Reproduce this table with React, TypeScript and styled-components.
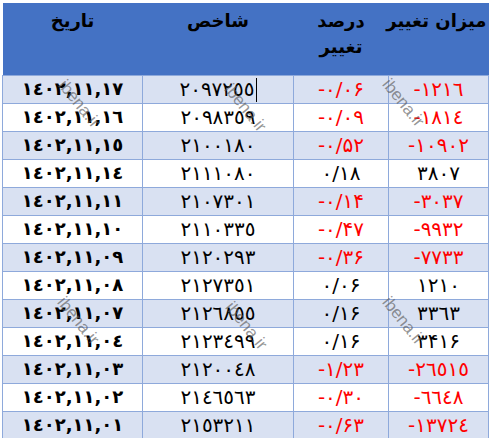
import styled, { createGlobalStyle } from "styled-components";

const GlobalStyle = createGlobalStyle`
  html, body {
    margin: 0;
    padding: 0;
    background: #ffffff;
  }
`;

type Row = {
  date: string;
  index: string;
  percent: string;
  change: string;
  caret?: boolean;
};

const rows: Row[] = [
  { date: "١٤٠٢,١١,١٧", index: "٢٠٩٧٢٥٥", percent: "-۰/۰۶", change: "-١٢١٦", caret: true },
  { date: "١٤٠٢,١١,١٦", index: "٢٠٩٨٣٥٩", percent: "-۰/۰۹", change: "-١٨١٤" },
  { date: "١٤٠٢,١١,١٥", index: "٢١٠٠١٨٠", percent: "-۰/۵۲", change: "-١٠٩٠٢" },
  { date: "١٤٠٢,١١,١٤", index: "٢١١١٠٨٠", percent: "۰/۱۸", change: "٣٨٠٧" },
  { date: "١٤٠٢,١١,١١", index: "٢١٠٧٣٠١", percent: "-۰/۱۴", change: "-٣٠٣٧" },
  { date: "١٤٠٢,١١,١٠", index: "٢١١٠٣٣٥", percent: "-۰/۴۷", change: "-٩٩٣٢" },
  { date: "١٤٠٢,١١,٠٩", index: "٢١٢٠٢٩٣", percent: "-۰/۳۶", change: "-٧٧٣٣" },
  { date: "١٤٠٢,١١,٠٨", index: "٢١٢٧٣٥١", percent: "۰/۰۶", change: "١٢١٠" },
  { date: "١٤٠٢,١١,٠٧", index: "٢١٢٦٨٥٥", percent: "۰/۱۶", change: "٣٣٦٣" },
  { date: "١٤٠٢,١١,٠٤", index: "٢١٢٣٤٩٩", percent: "۰/۱۶", change: "٣۴١۶" },
  { date: "١٤٠٢,١١,٠٣", index: "٢١٢٠٠٤٨", percent: "-۱/۲۳", change: "-٢٦٥١٥" },
  { date: "١٤٠٢,١١,٠٢", index: "٢١٤٦٥٦٣", percent: "-۰/۳۰", change: "-٦٦٤٨" },
  { date: "١٤٠٢,١١,٠١", index: "٢١٥٣٢١١", percent: "-۰/۶۳", change: "-١٣٧٢٤" },
];

// watermark centres, page coordinates
const marks = [
  { x: 79, y: 104 },
  { x: 245, y: 108 },
  { x: 403, y: 103 },
  { x: 78, y: 321 },
  { x: 246, y: 326 },
  { x: 403, y: 321 },
];

const Page = styled.div`
  position: relative;
  padding: 3px 2px 0 2px;
  width: 486px;
  overflow: hidden;
`;

const Table = styled.table`
  direction: rtl;
  border-collapse: collapse;
  table-layout: fixed;
  width: 486px;
  font-family: "DejaVu Sans", "Noto Sans", sans-serif;
`;

const HeadCell = styled.th`
  box-sizing: border-box;
  background: #4472c4;
  color: #000000;
  height: 72px;
  padding: 5px 2px 0;
  vertical-align: top;
  text-align: center;
  font-size: 18px;
  font-weight: bold;
  line-height: 26px;
  white-space: nowrap;
`;

const BodyRow = styled.tr<{ $shade: boolean }>`
  background: ${(p) => (p.$shade ? "#d9e1f2" : "#ffffff")};
`;

const Cell = styled.td<{ $neg?: boolean; $bold?: boolean }>`
  box-sizing: border-box;
  height: 28px;
  padding: 0 4px;
  border: 1px solid #8ea9db;
  direction: ltr;
  text-align: center;
  vertical-align: middle;
  font-size: ${(p) => (p.$bold ? "18px" : "20px")};
  line-height: 22px;
  font-weight: ${(p) => (p.$bold ? "bold" : "normal")};
  color: ${(p) => (p.$neg ? "#ff0000" : "#000000")};
  white-space: nowrap;
`;

const Caret = styled.span`
  display: inline-block;
  width: 1px;
  height: 24px;
  margin: -2px 0 -2px 1px;
  background: #000000;
  vertical-align: middle;
`;

const Watermark = styled.span<{ $x: number; $y: number }>`
  position: absolute;
  left: ${(p) => p.$x}px;
  top: ${(p) => p.$y}px;
  transform: translate(-50%, -50%) rotate(51deg);
  font-family: "Liberation Sans", Arial, sans-serif;
  font-size: 17px;
  color: rgba(90, 90, 90, 0.65);
  pointer-events: none;
  white-space: nowrap;
`;

export default function App() {
  return (
    <>
      <GlobalStyle />
      <Page>
        <Table>
          <colgroup>
            <col style={{ width: 100 }} />
            <col style={{ width: 95 }} />
            <col style={{ width: 151 }} />
            <col style={{ width: 140 }} />
          </colgroup>
          <thead>
            <tr>
              <HeadCell>میزان تغییر</HeadCell>
              <HeadCell>
                درصد
                <br />
                تغییر
              </HeadCell>
              <HeadCell>شاخص</HeadCell>
              <HeadCell>تاریخ</HeadCell>
            </tr>
          </thead>
          <tbody>
            {rows.map((r, i) => (
              <BodyRow key={r.date} $shade={i % 2 === 0}>
                <Cell $neg={r.change.startsWith("-")}>{r.change}</Cell>
                <Cell $neg={r.percent.startsWith("-")}>{r.percent}</Cell>
                <Cell>
                  {r.index}
                  {r.caret && <Caret />}
                </Cell>
                <Cell $bold>{r.date}</Cell>
              </BodyRow>
            ))}
          </tbody>
        </Table>
        {marks.map((m, i) => (
          <Watermark key={i} $x={m.x} $y={m.y}>
            ibena.ir
          </Watermark>
        ))}
      </Page>
    </>
  );
}
